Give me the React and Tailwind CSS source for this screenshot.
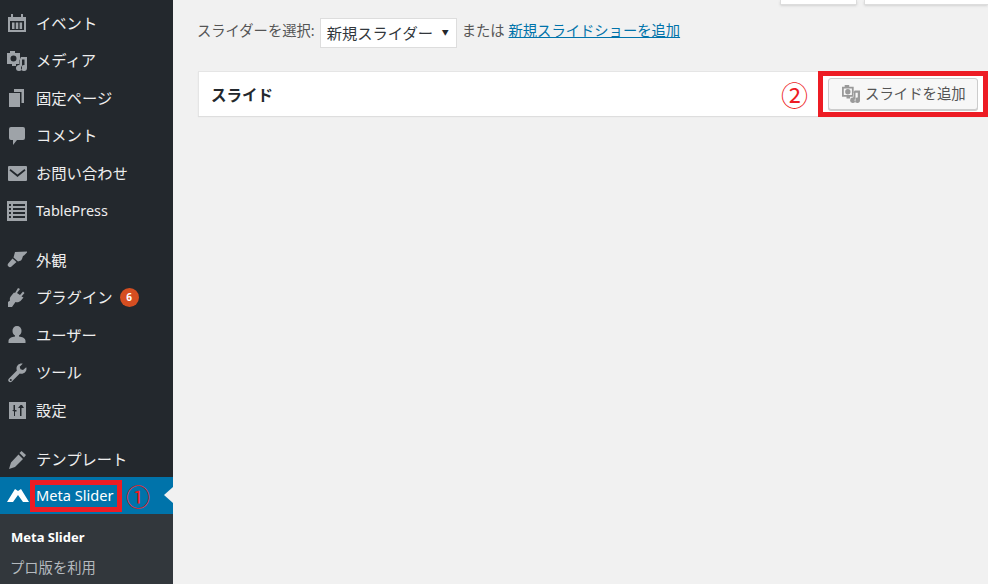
import React from "react";

// Dashicons style menu icons, 20x20 grid
const icons = {
  calendar: (
    <path fillRule="evenodd" d="M1 4h3V1h2v3h8V1h2v3h3v15H1V4zm2 4v9h14V8H3zm2 1.500h2.500V16H5V9.500zm3.800 0h2.500V16H8.800V9.500zm3.800 0h2.500V16h-2.500V9.500z" />
  ),
  media: (
    <path fillRule="evenodd" d="M0 2h3V0h5v2h5v11H9v2H5v-2H0V2zm6.500 2.500a3 3 0 1 0 0 6 3 3 0 0 0 0-6zM20 6v11a3 3 0 1 1-2.500-3V8.500h-2.500V17a3 3 0 1 1-2.500-3V9l1.500-3H20z" />
  ),
  page: (
    <path d="M7 1h10v14h-2.500V4H7V1zM2 5h11v14H2V5z" />
  ),
  comment: (
    <path d="M4 1h12a2 2 0 0 1 2 2v9a2 2 0 0 1-2 2h-6l-4 5v-5H4a2 2 0 0 1-2-2V3a2 2 0 0 1 2-2z" />
  ),
  mail: (
    <path fillRule="evenodd" d="M2 3h17a1 1 0 0 1 1 1v13a1 1 0 0 1-1 1H2a1 1 0 0 1-1-1V4a1 1 0 0 1 1-1zm1.500 3l7 5.500 7-5.500 1 1.500-8 6.500-8-6.500 1-1.500z" />
  ),
  table: (
    <path fillRule="evenodd" d="M0 0h20v20H0V0zm2 3v2h2V3H2zm4 0v2h12V3H6zM2 7v2h2V7H2zm4 0v2h12V7H6zm-4 4v2h2v-2H2zm4 0v2h12v-2H6zm-4 4v2h2v-2H2zm4 0v2h12v-2H6z" />
  ),
  brush: (
    <path d="M8 2l13-.5-4 4-1 .5-1 3-1 1.500-3 1-4.500-4L8 2zM5.500 8.500l4 3.500-5 4.500a2.200 2.200 0 0 1-3.300-2.900l4.300-5.100z" />
  ),
  plugin: (
    <path d="M11 0l2 1-3 4 3 2 3-3.500 1.500 1.500-3 3.500 2 1-3 3.500c-2 1.500-3.500 1.500-5 1L5 19H1v-5l2-1.500c-.5-2 0-3.500 1.500-5L7 4.500l1 .5 3-5z" />
  ),
  user: (
    <path d="M10 1a4.500 4.500 0 0 1 4.500 5c0 2-1 4-2.500 4.500v1c3 .5 6.500 1.500 6.500 4.500v2h-17v-2c0-3 3.500-4 6.500-4.500v-1C6.500 10 5.500 8 5.500 6A4.500 4.500 0 0 1 10 1z" />
  ),
  wrench: (
    <path d="M14.500.500c-2.700 0-5 2.200-5 5 0 .7.100 1.300.4 1.900L2 15.500c-1 1-1 2.300-.2 3.100.8.800 2.100.8 3.100-.2l7.900-8c.5.300 1.100.4 1.700.4 2.700 0 5-2.200 5-5 0-.6-.1-1.100-.3-1.600L16 7l-2.500-.8-.8-2.500L15.700.700c-.4-.1-.8-.2-1.200-.2zM3.800 16a1 1 0 1 1 0 2 1 1 0 0 1 0-2z" />
  ),
  settings: (
    <path fillRule="evenodd" d="M2 2h17v17H2V2zm4.500 3v5H5l2 1.500V16h1v-4.500h1.500V10H8V5H6.500zm7 0L11 8h2v8h1.500V8H17l-2-3h-1.500z" />
  ),
  pencil: (
    <path d="M14.500 1l4.500 4-2 2.500-4.500-4.500 2-2zM11.500 4.500L16 9 8 17l-6 2 2-6.500 7.500-8z" />
  ),
};

const groups = [
  [
    { icon: "calendar", label: "イベント" },
    { icon: "media", label: "メディア" },
    { icon: "page", label: "固定ページ" },
    { icon: "comment", label: "コメント" },
    { icon: "mail", label: "お問い合わせ" },
    { icon: "table", label: "TablePress", latin: true },
  ],
  [
    { icon: "brush", label: "外観" },
    { icon: "plugin", label: "プラグイン", badge: "6" },
    { icon: "user", label: "ユーザー" },
    { icon: "wrench", label: "ツール" },
    { icon: "settings", label: "設定" },
  ],
  [{ icon: "pencil", label: "テンプレート" }],
];

function MenuIcon({ name }) {
  return (
    <svg viewBox="0 0 20 20" className="w-5 h-5 shrink-0 fill-[#9ea3a8]">
      {icons[name]}
    </svg>
  );
}

function MenuItem({ item }) {
  return (
    <div className="flex items-center h-[37.5px] pl-[7px]">
      <MenuIcon name={item.icon} />
      <span className={`ml-[9px] text-[#eeeeee] whitespace-nowrap ${item.latin ? "text-[14.4px]" : "text-[15.3px]"}`}>
        {item.label}
      </span>
      {item.badge && (
        <span className="ml-[7px] w-[19px] h-[19px] rounded-full bg-[#d54e21] text-white text-[10px] font-bold flex items-center justify-center">
          {item.badge}
        </span>
      )}
    </div>
  );
}

function Sidebar() {
  return (
    <aside className="w-[173px] shrink-0 bg-[#23282d] pt-[4.4px] flex flex-col">
      <div className="flex flex-col gap-[12px]">
        {groups.map((group, i) => (
          <div key={i}>
            {group.map((item) => (
              <MenuItem key={item.label} item={item} />
            ))}
          </div>
        ))}
      </div>

      {/* active item */}
      <div className="-mt-[1px] h-[37px] bg-[#0073aa] flex items-center pl-[7px] relative">
        <svg viewBox="0 0 22 14" className="w-[22px] h-[14px] shrink-0 fill-white -mt-[2px]">
          <path d="M0 14L8 1l3 2 3-2 8 13h-6l-5-7-5 7H0z" />
        </svg>
        <div className="ml-[1px] border-[5px] border-[#ed1c24] h-[32px] w-[92px] flex items-center pl-[1px]">
          <span className="text-[14.6px] text-white whitespace-nowrap">Meta Slider</span>
        </div>
        <span className="ml-[4px] text-[24px] leading-none text-[#ed1c24] font-['Noto_Sans_CJK_JP',sans-serif]">①</span>
        <span className="absolute right-0 top-[10px] border-y-[8px] border-y-transparent border-r-[9px] border-r-[#f1f1f1]" />
      </div>

      {/* submenu */}
      <div className="bg-[#32373c] flex-1 pt-[8px]">
        <div className="h-[30px] pl-[11px] flex items-center text-[13px] font-bold text-white">Meta Slider</div>
        <div className="h-[30px] pl-[10px] flex items-center text-[14.3px] text-[#b4b9be]">プロ版を利用</div>
      </div>
    </aside>
  );
}

function Main() {
  return (
    <main className="flex-1 min-w-0 bg-[#f1f1f1] text-[#555555] text-[14.3px]">
      {/* cut off screen options tabs */}
      <div className="flex justify-end gap-[7px] h-[5px]">
        <div className="w-[77px] bg-white border-x border-b border-[#dddddd] shadow-sm" />
        <div className="w-[124px] bg-white border-l border-b border-[#dddddd] shadow-sm" />
      </div>

      <div className="pl-[24px] mt-[13px] flex items-center h-[30px]">
        <span className="whitespace-nowrap -mt-[4px]">スライダーを選択:</span>
        <div className="ml-[5px] w-[137px] h-[30px] shrink-0 bg-white border border-[#dddddd] flex items-center justify-between pl-[6px] pr-[7px]">
          <span className="text-[15.3px] text-[#32373c] whitespace-nowrap">新規スライダー</span>
          <span className="text-[7px] text-[#23282d]">▼</span>
        </div>
        <span className="ml-[5px] whitespace-nowrap -mt-[4px]">または</span>
        <a className="ml-[4px] text-[#0073aa] underline whitespace-nowrap -mt-[4px]">新規スライドショーを追加</a>
      </div>

      <div className="ml-[25px] mt-[23px] h-[45px] bg-white border-t border-l border-[#e5e5e5] shadow-[0_1px_1px_rgba(0,0,0,0.08)] flex items-center justify-between">
        <span className="ml-[12px] mt-[3px] text-[15.5px] font-bold text-[#23282d]">スライド</span>
        <div className="flex items-center">
          <span className="text-[27px] leading-none text-[#ed1c24] mr-[10px] font-['Noto_Sans_CJK_JP',sans-serif]">②</span>
          <div className="w-[170px] h-[46px] border-[5px] border-[#ed1c24] bg-white flex items-center justify-center">
            <button className="w-[150px] h-[32px] bg-[#f7f7f7] border border-[#cccccc] rounded-[3px] shadow-[0_1px_0_#cccccc] flex items-center pl-[13px] text-[#555555] text-[14.4px]">
              <svg viewBox="0 0 20 20" className="w-[18px] h-[18px] shrink-0 fill-[#9a9a9a]">
                <path fillRule="evenodd" d="M0 2h3V0h5v2h5v11H9v2H5v-2H0V2zm2 2v7h9V4H2zm4.500.500a3 3 0 1 0 0 6 3 3 0 0 0 0-6zM20 6v11a3 3 0 1 1-2.500-3V8.500h-2.500V17a3 3 0 1 1-2.500-3V9l1.500-3H20z" />
              </svg>
              <span className="ml-[5px] whitespace-nowrap">スライドを追加</span>
            </button>
          </div>
        </div>
      </div>
    </main>
  );
}

export default function App() {
  return (
    <div className="flex w-[988px] h-[584px] overflow-hidden font-['Noto_Sans','Noto_Sans_CJK_JP',sans-serif]">
      <Sidebar />
      <Main />
    </div>
  );
}
